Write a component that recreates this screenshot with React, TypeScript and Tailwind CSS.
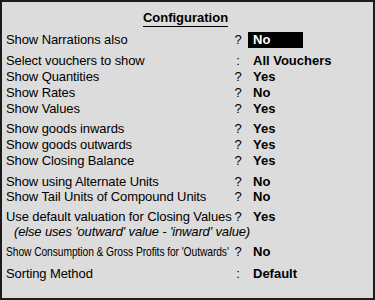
const font = { fontFamily: '"Liberation Sans", Arial, sans-serif' };

type RowProps = {
  label: React.ReactNode;
  sep: string;
  value: string;
  cls?: string;
  labelW?: string;
  selected?: boolean;
};

const Row = ({ label, sep, value, cls = "h-[16px] leading-[16px]", labelW = "w-[228px]", selected }: RowProps) => (
  <div className={`flex ${cls}`}>
    <div className={`${labelW} shrink-0 whitespace-nowrap tracking-[-0.1px]`}>{label}</div>
    <div className="w-[8px] shrink-0 text-center">{sep}</div>
    <div
      className={`ml-[6px] pl-[5px] font-bold ${
        selected ? "w-[55px] bg-black text-white" : ""
      }`}
    >
      {value}
    </div>
  </div>
);

export default function App() {
  return (
    <div
      className="w-[375px] h-[300px] bg-[#dcdcdc] border-2 border-[#1c1c1c] pt-[6px] pl-[4px] text-[13px] text-black"
      style={font}
    >
      <div className="h-[16px] text-center pr-[8px]">
        <span className="inline-block font-bold leading-[16px] border-b border-black">
          Configuration
        </span>
      </div>

      <div className="mt-[8px] flex flex-col">
        <Row label="Show Narrations also" sep="?" value="No" selected />
        <div className="mt-[5px]">
          <Row label="Select vouchers to show" sep=":" value="All Vouchers" />
          <Row label="Show Quantities" sep="?" value="Yes" />
          <Row label="Show Rates" sep="?" value="No" />
          <Row label="Show Values" sep="?" value="Yes" />
        </div>
        <div className="mt-[4px]">
          <Row label="Show goods inwards" sep="?" value="Yes" />
          <Row label="Show goods outwards" sep="?" value="Yes" />
          <Row label="Show Closing Balance" sep="?" value="Yes" />
        </div>
        <div className="mt-[5px]">
          <Row label="Show using Alternate Units" sep="?" value="No" cls="h-[15px] leading-[15px]" />
          <Row label="Show Tail Units of Compound Units" sep="?" value="No" />
        </div>
        <div className="mt-[4px]">
          <Row
            label="Use default valuation for Closing Values"
            sep="?"
            value="Yes"
            cls="h-[15px] leading-[15px]"
          />
          <div className="h-[16px] leading-[16px] pl-[8px] italic whitespace-nowrap tracking-[-0.15px]">
            (else uses 'outward' value - 'inward' value)
          </div>
        </div>
        <div className="mt-[4px]">
          <Row
            label={
              <span className="inline-block origin-left scale-x-[0.79]">
                Show Consumption &amp; Gross Profits for 'Outwards'
              </span>
            }
            labelW="w-[232px] -mr-[4px]"
            sep="?"
            value="No"
          />
        </div>
        <div className="mt-[6px]">
          <Row label="Sorting Method" sep=":" value="Default" />
        </div>
      </div>
    </div>
  );
}
